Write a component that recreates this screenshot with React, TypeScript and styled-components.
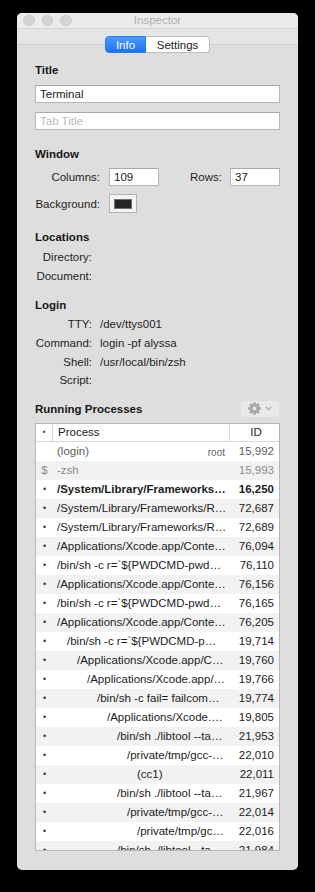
import React from "react";
import styled, { createGlobalStyle, css } from "styled-components";

const Global = createGlobalStyle`
  html, body { margin: 0; padding: 0; background: #000; }
  body {
    font-family: "Liberation Sans", Arial, sans-serif;
    font-size: 11.5px;
    color: #1f1f1f;
  }
  * { box-sizing: border-box; }
`;

const Page = styled.div`
  padding: 13px 0 0 17px;
`;

const Window = styled.div`
  width: 281px;
  height: 857px;
  border-radius: 5px;
  overflow: hidden;
  background: #dedede;
  display: flex;
  flex-direction: column;
`;

const TitleBar = styled.div`
  height: 16px;
  background: #ebebeb;
  border-bottom: 1px solid #d2d2d2;
  display: grid;
  grid-template-columns: 1fr auto 1fr;
  align-items: center;
  padding: 0 6px;
`;

const Lights = styled.div`
  display: flex;
  gap: 7px;
  align-items: center;
`;

const Light = styled.span`
  width: 11.5px;
  height: 11.5px;
  border-radius: 50%;
  background: #d4d4d4;
  border: 1px solid #c8c8c8;
`;

const WindowTitle = styled.div`
  color: #b0b0b0;
  line-height: 15px;
`;

const TabStrip = styled.div`
  background: #e5e5e5;
  padding-top: 7px;
  display: flex;
  justify-content: center;
`;

const Segmented = styled.div`
  position: relative;
  z-index: 1;
  display: flex;
  height: 17px;
  margin-bottom: -9px;
  margin-left: 0px;
`;

const Segment = styled.div<{ $active?: boolean }>`
  height: 17px;
  display: flex;
  align-items: center;
  justify-content: center;
  ${(p) =>
    p.$active
      ? css`
          width: 41px;
          color: #fff;
          background: linear-gradient(#4b9afc, #1b72f6);
          border: 1px solid #2a7cf4;
          border-radius: 4px 0 0 4px;
        `
      : css`
          width: 64px;
          color: #1a1a1a;
          background: #fff;
          border: 1px solid #bcbcbc;
          border-left: none;
          border-radius: 0 4px 4px 0;
        `}
`;

const Content = styled.div`
  flex: 1;
  border-top: 1px solid #cdcdcd;
  padding: 0 18px 0 18px;
  display: flex;
  flex-direction: column;
`;

const Heading = styled.div<{ $mt: number }>`
  font-weight: bold;
  height: 14px;
  line-height: 14px;
  margin-top: ${(p) => p.$mt}px;
  color: #161616;
`;

const TextField = styled.div<{ $mt: number; $placeholder?: boolean; $w?: number }>`
  height: 18px;
  margin-top: ${(p) => p.$mt}px;
  width: ${(p) => (p.$w ? `${p.$w}px` : "100%")};
  background: #fff;
  border: 1px solid #b7b7b7;
  border-top-color: #a9a9a9;
  padding: 0 4px;
  line-height: 16px;
  color: ${(p) => (p.$placeholder ? "#bdb9bb" : "#1a1a1a")};
  white-space: nowrap;
`;

const FormRow = styled.div<{ $mt: number; $h: number }>`
  display: flex;
  align-items: center;
  height: ${(p) => p.$h}px;
  margin-top: ${(p) => p.$mt}px;
`;

const FormLabel = styled.div<{ $w?: number }>`
  ${(p) => (p.$w ? `width: ${p.$w}px;` : "flex: 1; padding-right: 8px;")}
  text-align: right;
  margin-right: ${(p) => (p.$w ? 9 : 0)}px;
  white-space: nowrap;
`;

const ColorWell = styled.div`
  width: 28px;
  height: 19px;
  border: 1px solid #b3b3b3;
  background: #f3f3f3;
  display: flex;
  align-items: center;
  justify-content: center;
`;

const Swatch = styled.div`
  width: 18px;
  height: 10px;
  background: #262626;
  border: 1px solid #6e6e6e;
`;

const InfoList = styled.div<{ $mt: number }>`
  display: flex;
  flex-direction: column;
  margin-top: ${(p) => p.$mt}px;
`;

const InfoRow = styled.div<{ $h: number }>`
  display: grid;
  grid-template-columns: 57px 1fr;
  column-gap: 8px;
  height: ${(p) => p.$h}px;
  align-items: center;
  white-space: nowrap;
`;

const InfoLabel = styled.div`
  text-align: right;
`;

const SectionBar = styled.div`
  display: flex;
  justify-content: space-between;
  align-items: center;
  height: 16px;
  margin-top: 11px;
`;

const ActionButton = styled.div`
  width: 38px;
  height: 16px;
  margin-right: 1px;
  border-radius: 4px;
  background: #e9e9e9;
  display: flex;
  align-items: center;
  padding-left: 7px;
  gap: 4px;
`;

const Table = styled.div`
  margin-top: 6px;
  height: 428px;
  border: 1px solid #b6b6b6;
  background: #fff;
  overflow: hidden;
  display: flex;
  flex-direction: column;
`;

const Columns = css`
  display: grid;
  grid-template-columns: 17px 177px 49px;
`;

const HeaderRow = styled.div`
  ${Columns};
  height: 22px;
  border-bottom: 1px solid #dadada;
  align-items: center;
  color: #222;
`;

const HeaderCell = styled.div<{ $kind: "dot" | "name" | "id" }>`
  height: 17px;
  display: flex;
  align-items: center;
  ${(p) =>
    p.$kind === "dot"
      ? css`
          justify-content: center;
          border-right: 1px solid #d6d6d6;
          font-size: 9px;
          color: #555;
        `
      : p.$kind === "name"
      ? css`
          padding-left: 5px;
          border-right: 1px solid #d6d6d6;
        `
      : css`
          justify-content: center;
          padding-left: 3px;
        `}
`;

const Row = styled.div<{ $odd: boolean; $tone?: "dim" | "faint"; $bold?: boolean }>`
  ${Columns};
  height: 19px;
  flex: none;
  align-items: center;
  background: ${(p) => (p.$odd ? "#f2f2f2" : "#fff")};
  color: ${(p) => (p.$tone === "dim" ? "#5c5c5c" : p.$tone === "faint" ? "#8a8a8a" : "#1c1c1c")};
  font-weight: ${(p) => (p.$bold ? "bold" : "normal")};
  white-space: nowrap;
`;

const Marker = styled.div<{ $dollar?: boolean }>`
  text-align: center;
  font-size: ${(p) => (p.$dollar ? "11.5px" : "9px")};
  color: ${(p) => (p.$dollar ? "#8a8a8a" : "#333")};
  font-weight: normal;
`;

const NameCell = styled.div`
  display: flex;
  align-items: center;
  overflow: hidden;
  padding-right: 5px;
`;

const NameText = styled.span`
  flex: 1;
  overflow: hidden;
`;

const Tag = styled.span`
  font-size: 10px;
  color: #666;
  padding-top: 3px;
`;

const IdCell = styled.div`
  text-align: right;
  padding-right: 5px;
`;

type Proc = {
  mark: string;
  name: string;
  id: string;
  depth: number;
  tone?: "dim" | "faint";
  bold?: boolean;
  tag?: string;
};

const B = "\u2022";
const processes: Proc[] = [
  { mark: "", name: "(login)", id: "15,992", depth: 0, tone: "dim", tag: "root" },
  { mark: "$", name: "-zsh", id: "15,993", depth: 0, tone: "faint" },
  { mark: B, name: "/System/Library/Frameworks\u2026", id: "16,250", depth: 0, bold: true },
  { mark: B, name: "/System/Library/Frameworks/R\u2026", id: "72,687", depth: 0 },
  { mark: B, name: "/System/Library/Frameworks/R\u2026", id: "72,689", depth: 0 },
  { mark: B, name: "/Applications/Xcode.app/Conte\u2026", id: "76,094", depth: 0 },
  { mark: B, name: "/bin/sh -c r=`${PWDCMD-pwd\u2026", id: "76,110", depth: 0 },
  { mark: B, name: "/Applications/Xcode.app/Conte\u2026", id: "76,156", depth: 0 },
  { mark: B, name: "/bin/sh -c r=`${PWDCMD-pwd\u2026", id: "76,165", depth: 0 },
  { mark: B, name: "/Applications/Xcode.app/Conte\u2026", id: "76,205", depth: 0 },
  { mark: B, name: "/bin/sh -c r=`${PWDCMD-p\u2026", id: "19,714", depth: 1 },
  { mark: B, name: "/Applications/Xcode.app/C\u2026", id: "19,760", depth: 2 },
  { mark: B, name: "/Applications/Xcode.app/\u2026", id: "19,766", depth: 3 },
  { mark: B, name: "/bin/sh -c fail= failcom\u2026", id: "19,774", depth: 4 },
  { mark: B, name: "/Applications/Xcode.\u2026", id: "19,805", depth: 5 },
  { mark: B, name: "/bin/sh ./libtool --ta\u2026", id: "21,953", depth: 6 },
  { mark: B, name: "/private/tmp/gcc-\u2026", id: "22,010", depth: 7 },
  { mark: B, name: "(cc1)", id: "22,011", depth: 8 },
  { mark: B, name: "/bin/sh ./libtool --ta\u2026", id: "21,967", depth: 6 },
  { mark: B, name: "/private/tmp/gcc-\u2026", id: "22,014", depth: 7 },
  { mark: B, name: "/private/tmp/gc\u2026", id: "22,016", depth: 8 },
  { mark: B, name: "/bin/sh ./libtool --ta\u2026", id: "21,984", depth: 6 },
];

const Gear = () => (
  <svg width="13" height="13" viewBox="0 0 13 13">
    <g fill="#a8a8a8" transform="translate(6.5 6.5)">
      {[0, 45, 90, 135].map((a) => (
        <rect key={a} x="-1.4" y="-6.3" width="2.8" height="12.6" rx="0.4" transform={`rotate(${a})`} />
      ))}
      <circle r="4.6" />
      <circle r="1.9" fill="#e9e9e9" />
    </g>
  </svg>
);

const Chevron = () => (
  <svg width="7" height="5" viewBox="0 0 7 5">
    <polyline points="0.8,1 3.5,3.8 6.2,1" fill="none" stroke="#a3a3a3" strokeWidth="1.1" />
  </svg>
);

export default function App() {
  return (
    <Page>
      <Global />
      <Window>
        <TitleBar>
          <Lights>
            <Light />
            <Light />
            <Light />
          </Lights>
          <WindowTitle>Inspector</WindowTitle>
          <span />
        </TitleBar>
        <TabStrip>
          <Segmented>
            <Segment $active>Info</Segment>
            <Segment>Settings</Segment>
          </Segmented>
        </TabStrip>
        <Content>
          <Heading $mt={18}>Title</Heading>
          <TextField $mt={8}>Terminal</TextField>
          <TextField $mt={9} $placeholder>
            Tab Title
          </TextField>

          <Heading $mt={17}>Window</Heading>
          <FormRow $mt={7} $h={18}>
            <FormLabel $w={65}>Columns:</FormLabel>
            <TextField $mt={0} $w={50}>
              109
            </TextField>
            <FormLabel>Rows:</FormLabel>
            <TextField $mt={0} $w={50}>
              37
            </TextField>
          </FormRow>
          <FormRow $mt={8} $h={19}>
            <FormLabel $w={65}>Background:</FormLabel>
            <ColorWell>
              <Swatch />
            </ColorWell>
          </FormRow>

          <Heading $mt={17}>Locations</Heading>
          <InfoList $mt={4}>
            <InfoRow $h={18.5}>
              <InfoLabel>Directory:</InfoLabel>
              <span />
            </InfoRow>
            <InfoRow $h={18.5}>
              <InfoLabel>Document:</InfoLabel>
              <span />
            </InfoRow>
          </InfoList>

          <Heading $mt={13}>Login</Heading>
          <InfoList $mt={3}>
            <InfoRow $h={18.7}>
              <InfoLabel>TTY:</InfoLabel>
              <span>/dev/ttys001</span>
            </InfoRow>
            <InfoRow $h={18.7}>
              <InfoLabel>Command:</InfoLabel>
              <span>login -pf alyssa</span>
            </InfoRow>
            <InfoRow $h={18.7}>
              <InfoLabel>Shell:</InfoLabel>
              <span>/usr/local/bin/zsh</span>
            </InfoRow>
            <InfoRow $h={18.7}>
              <InfoLabel>Script:</InfoLabel>
              <span />
            </InfoRow>
          </InfoList>

          <SectionBar>
            <Heading $mt={0}>Running Processes</Heading>
            <ActionButton>
              <Gear />
              <Chevron />
            </ActionButton>
          </SectionBar>

          <Table>
            <HeaderRow>
              <HeaderCell $kind="dot">{B}</HeaderCell>
              <HeaderCell $kind="name">Process</HeaderCell>
              <HeaderCell $kind="id">ID</HeaderCell>
            </HeaderRow>
            {processes.map((p, i) => (
              <Row key={i} $odd={i % 2 === 1} $tone={p.tone} $bold={p.bold}>
                <Marker $dollar={p.mark === "$"}>{p.mark}</Marker>
                <NameCell style={{ paddingLeft: 4 + p.depth * 10 }}>
                  <NameText>{p.name}</NameText>
                  {p.tag && <Tag>{p.tag}</Tag>}
                </NameCell>
                <IdCell>{p.id}</IdCell>
              </Row>
            ))}
          </Table>
        </Content>
      </Window>
    </Page>
  );
}
